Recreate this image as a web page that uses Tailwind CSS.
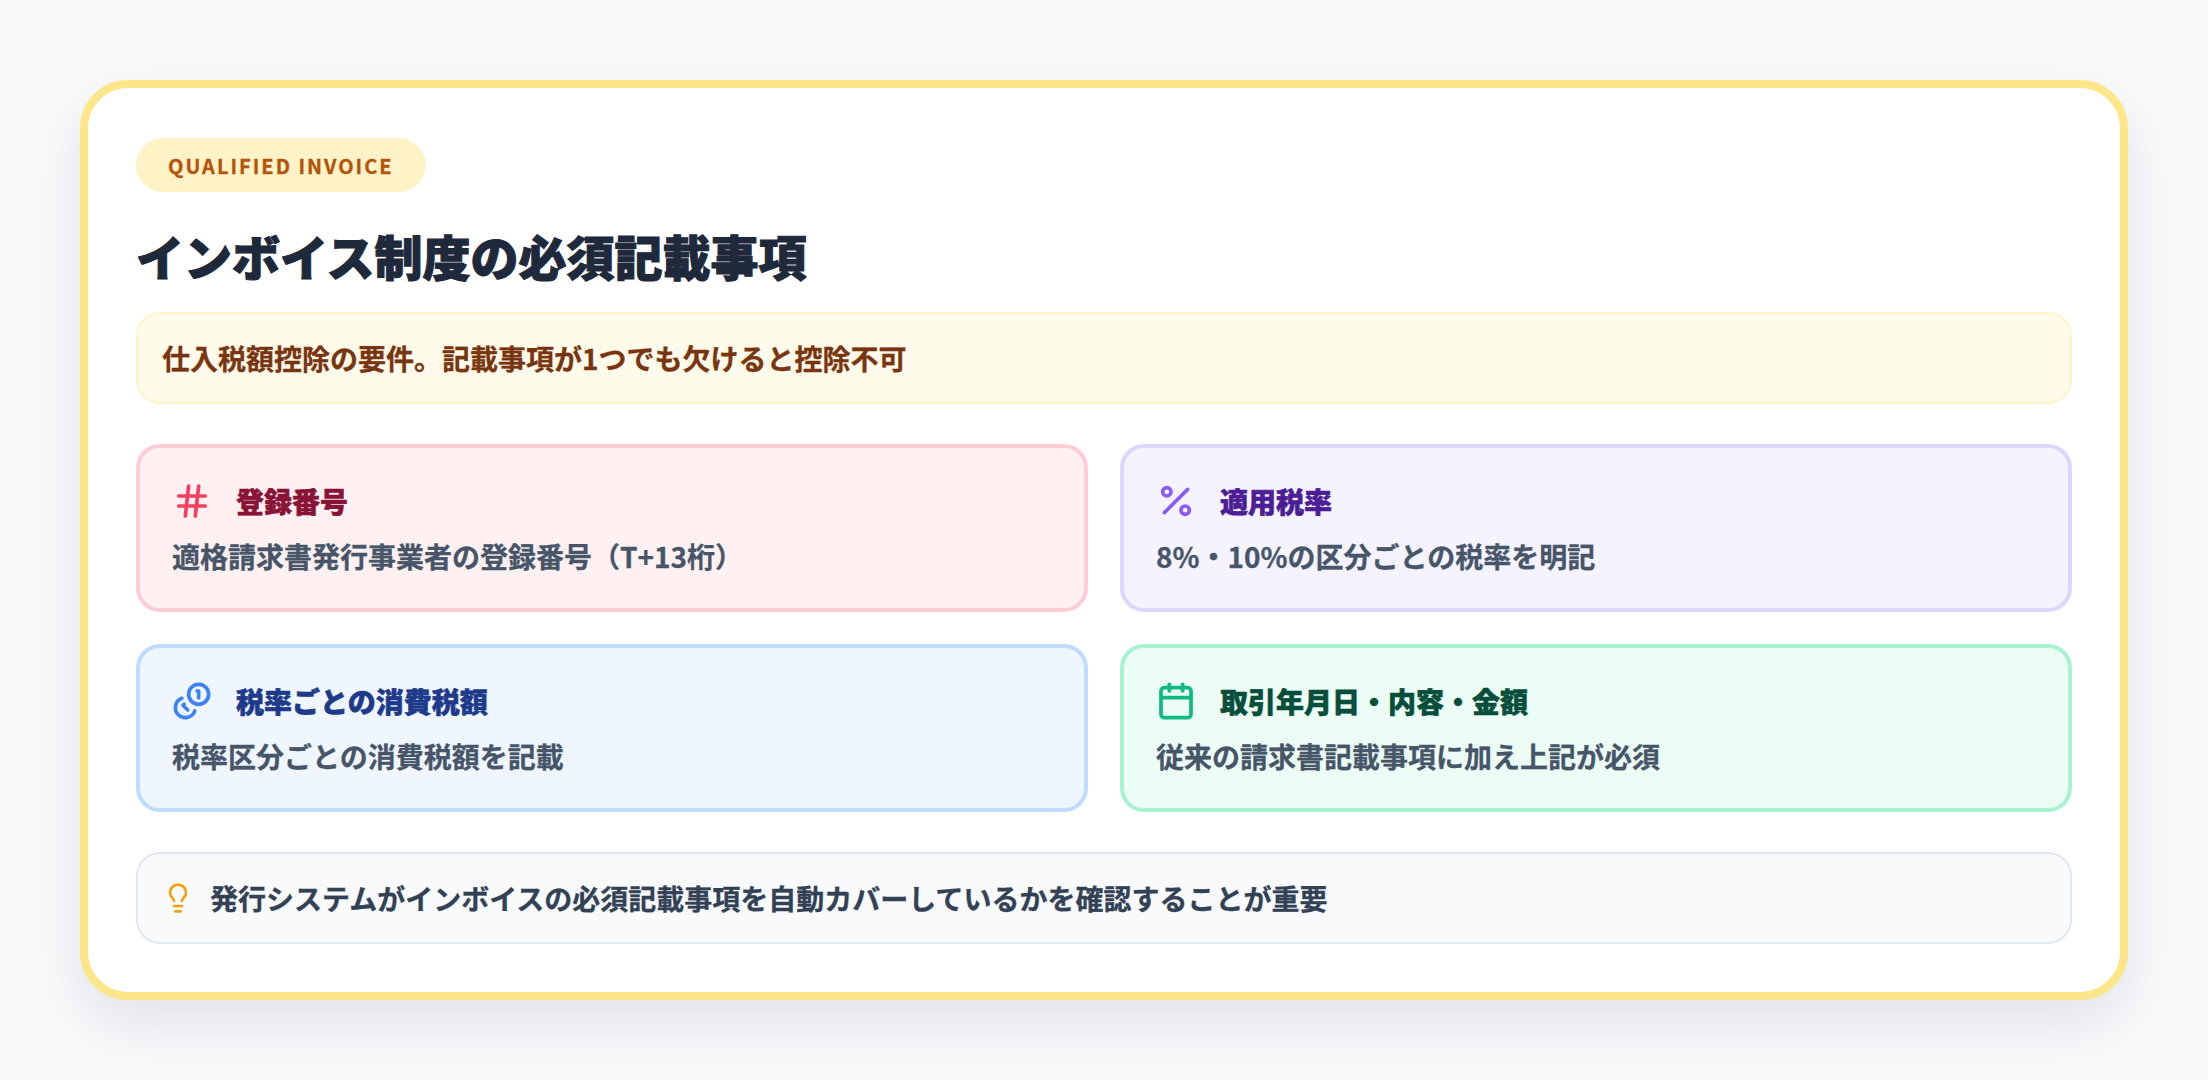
<!DOCTYPE html>
<html lang="ja">
<head>
<meta charset="UTF-8">
<script src="https://cdn.jsdelivr.net/npm/@tailwindcss/browser@4"></script>
<title>インボイス制度の必須記載事項</title>
</head>
<body class="bg-[#f8fafc] font-['Noto_Sans_CJK_JP','Noto_Sans',sans-serif]">
<div class="w-[2208px] h-[1080px] px-[80px] pt-[80px]">
  <div class="h-[920px] bg-white border-[8px] border-[#fde68a] rounded-[48px] px-[48px] pt-[50px] pb-[48px] flex flex-col shadow-[0_24px_60px_rgba(15,23,42,0.1)]">
    <div class="self-start h-[54px] px-[32px] pt-[2px] flex items-center rounded-full bg-[#fef3c7] text-[#b45309] text-[20px] font-bold tracking-[0.1em] [-webkit-text-stroke:0.3px_currentColor]">QUALIFIED INVOICE</div>
    <h1 class="mt-[27px] text-[48px] leading-[72px] font-black text-[#1e293b] [-webkit-text-stroke:1.1px_currentColor]">インボイス制度の必須記載事項</h1>
    <div class="mt-[21px] h-[92px] px-[24px] flex items-center rounded-[24px] bg-[#fffbeb] border-2 border-[#fef3c7] text-[28px] font-bold text-[#78350f] [-webkit-text-stroke:0.3px_currentColor]">仕入税額控除の要件。記載事項が1つでも欠けると控除不可</div>

    <div class="mt-[40px] grid grid-cols-2 gap-[32px]">
      <div class="h-[168px] px-[32px] pt-[32px] flex flex-col gap-[13px] rounded-[24px] bg-[#fff1f2] border-4 border-[#fecdd3]">
        <div class="flex items-center gap-[24px]">
          <svg class="w-[40px] h-[40px] text-[#f43f5e]" viewBox="0 0 24 24" fill="none" stroke="currentColor" stroke-width="2.2" stroke-linecap="round" stroke-linejoin="round"><line x1="4" y1="9" x2="20" y2="9"/><line x1="4" y1="15" x2="20" y2="15"/><line x1="10" y1="3" x2="8" y2="21"/><line x1="16" y1="3" x2="14" y2="21"/></svg>
          <span class="text-[28px] font-black text-[#881337] [-webkit-text-stroke:0.6px_currentColor]">登録番号</span>
        </div>
        <p class="text-[28px] leading-[42px] font-bold text-[#475569] [-webkit-text-stroke:0.3px_currentColor]">適格請求書発行事業者の登録番号（T+13桁）</p>
      </div>
      <div class="h-[168px] px-[32px] pt-[32px] flex flex-col gap-[13px] rounded-[24px] bg-[#f5f3ff] border-4 border-[#ddd6fe]">
        <div class="flex items-center gap-[24px]">
          <svg class="w-[40px] h-[40px] text-[#8b5cf6]" viewBox="0 0 24 24" fill="none" stroke="currentColor" stroke-width="2.2" stroke-linecap="round" stroke-linejoin="round"><line x1="19" y1="5" x2="5" y2="19"/><circle cx="6.5" cy="6.5" r="2.5"/><circle cx="17.5" cy="17.5" r="2.5"/></svg>
          <span class="text-[28px] font-black text-[#4c1d95] [-webkit-text-stroke:0.6px_currentColor]">適用税率</span>
        </div>
        <p class="text-[28px] leading-[42px] font-bold text-[#475569] [-webkit-text-stroke:0.3px_currentColor]">8%・10%の区分ごとの税率を明記</p>
      </div>
      <div class="h-[168px] px-[32px] pt-[32px] flex flex-col gap-[13px] rounded-[24px] bg-[#eff6ff] border-4 border-[#bfdbfe]">
        <div class="flex items-center gap-[24px]">
          <svg class="w-[40px] h-[40px] text-[#3b82f6]" viewBox="0 0 24 24" fill="none" stroke="currentColor" stroke-width="2.2" stroke-linecap="round" stroke-linejoin="round"><circle cx="16" cy="8" r="6"/><path d="M5.91 10.37A6 6 0 1 0 13.66 18"/><path d="M15 6h1v4"/><path d="m7.29 13.88-.7.71 2.82 2.82"/></svg>
          <span class="text-[28px] font-black text-[#1e3a8a] [-webkit-text-stroke:0.6px_currentColor]">税率ごとの消費税額</span>
        </div>
        <p class="text-[28px] leading-[42px] font-bold text-[#475569] [-webkit-text-stroke:0.3px_currentColor]">税率区分ごとの消費税額を記載</p>
      </div>
      <div class="h-[168px] px-[32px] pt-[32px] flex flex-col gap-[13px] rounded-[24px] bg-[#ecfdf5] border-4 border-[#a7f3d0]">
        <div class="flex items-center gap-[24px]">
          <svg class="w-[40px] h-[40px] text-[#10b981]" viewBox="0 0 24 24" fill="none" stroke="currentColor" stroke-width="2.2" stroke-linecap="round" stroke-linejoin="round"><path d="M8 2v4"/><path d="M16 2v4"/><rect width="18" height="18" x="3" y="4" rx="2"/><path d="M3 10h18"/></svg>
          <span class="text-[28px] font-black text-[#064e3b] [-webkit-text-stroke:0.6px_currentColor]">取引年月日・内容・金額</span>
        </div>
        <p class="text-[28px] leading-[42px] font-bold text-[#475569] [-webkit-text-stroke:0.3px_currentColor]">従来の請求書記載事項に加え上記が必須</p>
      </div>
    </div>

    <div class="mt-[40px] h-[92px] px-[24px] flex items-center gap-[16px] rounded-[24px] bg-[#f8fafc] border-2 border-[#e2e8f0]">
      <svg class="w-[32px] h-[32px] text-[#f59e0b]" viewBox="0 0 24 24" fill="none" stroke="currentColor" stroke-width="2" stroke-linecap="round" stroke-linejoin="round"><path d="M15 14c.2-1 .7-1.7 1.5-2.5 1-.9 1.5-2.2 1.5-3.5A6 6 0 0 0 6 8c0 1 .2 2.2 1.5 3.5.7.7 1.3 1.5 1.5 2.5"/><path d="M9 18h6"/><path d="M10 22h4"/></svg>
      <span class="text-[28px] font-bold text-[#334155] [-webkit-text-stroke:0.3px_currentColor]">発行システムがインボイスの必須記載事項を自動カバーしているかを確認することが重要</span>
    </div>
  </div>
</div>
</body>
</html>
